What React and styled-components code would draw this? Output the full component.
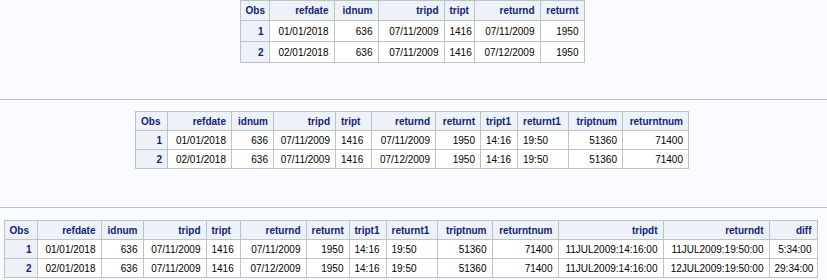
import React from "react";
import styled, { createGlobalStyle } from "styled-components";

const Global = createGlobalStyle`
  html, body { margin: 0; padding: 0; background: #fafbfe; }
  body { font-family: "Liberation Sans", Arial, Helvetica, sans-serif; }
`;

const Page = styled.div`
  width: 827px;
  display: flex;
  flex-direction: column;
`;

const Section = styled.div`
  display: flex;
  justify-content: center;
  padding: ${(p) => p.$top}px ${(p) => p.$right}px ${(p) => p.$bottom}px 0;
`;

const Rule = styled.div`
  height: 0;
  border-top: 1px solid #c0c0c0;
  width: 100%;
`;

const Table = styled.table`
  border-collapse: collapse;
  table-layout: fixed;
  width: ${(p) => p.$w}px;
  font-size: ${(p) => p.$fs}px;
  border: 1px solid #c1c1c1;
  background: #fff;
`;

const Row = styled.tr`
  height: ${(p) => p.$h}px;
`;

const Th = styled.th`
  background: #edf2f9;
  color: #112277;
  font-weight: bold;
  border: 1px solid #c1c1c1;
  padding: 0 5px;
  text-align: ${(p) => p.$align};
  white-space: nowrap;
  overflow: hidden;
`;

const Td = styled.td`
  color: #000;
  border: 1px solid #c1c1c1;
  padding: 0 5px;
  text-align: ${(p) => p.$align};
  white-space: nowrap;
  overflow: hidden;
`;

const ObsCell = styled.th`
  background: #edf2f9;
  color: #112277;
  font-weight: bold;
  border: 1px solid #c1c1c1;
  padding: 0 5px;
  text-align: right;
`;

const cols1 = [
  ["Obs", 29, "left"],
  ["refdate", 65, "right"],
  ["idnum", 44, "right"],
  ["tripd", 66, "right"],
  ["tript", 30, "left"],
  ["returnd", 66, "right"],
  ["returnt", 44, "right"],
];
const cols2 = [
  ["Obs", 32, "left"],
  ["refdate", 64, "right"],
  ["idnum", 42, "right"],
  ["tripd", 62, "right"],
  ["tript", 36, "left"],
  ["returnd", 64, "right"],
  ["returnt", 45, "right"],
  ["tript1", 37, "left"],
  ["returnt1", 51, "left"],
  ["triptnum", 54, "right"],
  ["returntnum", 66, "right"],
];
const cols3 = [
  ["Obs", 33, "left"],
  ["refdate", 64, "right"],
  ["idnum", 42, "right"],
  ["tripd", 63, "right"],
  ["tript", 34, "left"],
  ["returnd", 66, "right"],
  ["returnt", 43, "right"],
  ["tript1", 37, "left"],
  ["returnt1", 51, "left"],
  ["triptnum", 55, "right"],
  ["returntnum", 66, "right"],
  ["tripdt", 105, "right"],
  ["returndt", 106, "right"],
  ["diff", 48, "right"],
];

const rows = [
  {
    Obs: "1", refdate: "01/01/2018", idnum: "636", tripd: "07/11/2009", tript: "1416",
    returnd: "07/11/2009", returnt: "1950", tript1: "14:16", returnt1: "19:50",
    triptnum: "51360", returntnum: "71400", tripdt: "11JUL2009:14:16:00",
    returndt: "11JUL2009:19:50:00", diff: "5:34:00",
  },
  {
    Obs: "2", refdate: "02/01/2018", idnum: "636", tripd: "07/11/2009", tript: "1416",
    returnd: "07/12/2009", returnt: "1950", tript1: "14:16", returnt1: "19:50",
    triptnum: "51360", returntnum: "71400", tripdt: "11JUL2009:14:16:00",
    returndt: "12JUL2009:19:50:00", diff: "29:34:00",
  },
];

function DataTable({ cols, fs, hh, rh }) {
  const total = cols.reduce((s, c) => s + c[1], 0) + 1;
  return (
    <Table $fs={fs} $w={total}>
      <colgroup>
        {cols.map(([n, w]) => (
          <col key={n} style={{ width: w }} />
        ))}
      </colgroup>
      <thead>
        <Row $h={hh}>
          {cols.map(([n, , a]) => (
            <Th key={n} $align={a}>{n}</Th>
          ))}
        </Row>
      </thead>
      <tbody>
        {rows.map((r) => (
          <Row key={r.Obs} $h={rh}>
            {cols.map(([n, , a]) =>
              n === "Obs" ? (
                <ObsCell key={n}>{r.Obs}</ObsCell>
              ) : (
                <Td key={n} $align={a}>{r[n]}</Td>
              )
            )}
          </Row>
        ))}
      </tbody>
    </Table>
  );
}

export default function App() {
  return (
    <Page>
      <Global />
      <Section $top={0} $right={3} $bottom={36}>
        <DataTable cols={cols1} fs={10} hh={20} rh={21} />
      </Section>
      <Rule />
      <Section $top={11} $right={3} $bottom={38}>
        <DataTable cols={cols2} fs={10} hh={19} rh={19} />
      </Section>
      <Rule />
      <Section $top={12} $right={6} $bottom={0}>
        <DataTable cols={cols3} fs={10} hh={19} rh={19} />
      </Section>
    </Page>
  );
}
